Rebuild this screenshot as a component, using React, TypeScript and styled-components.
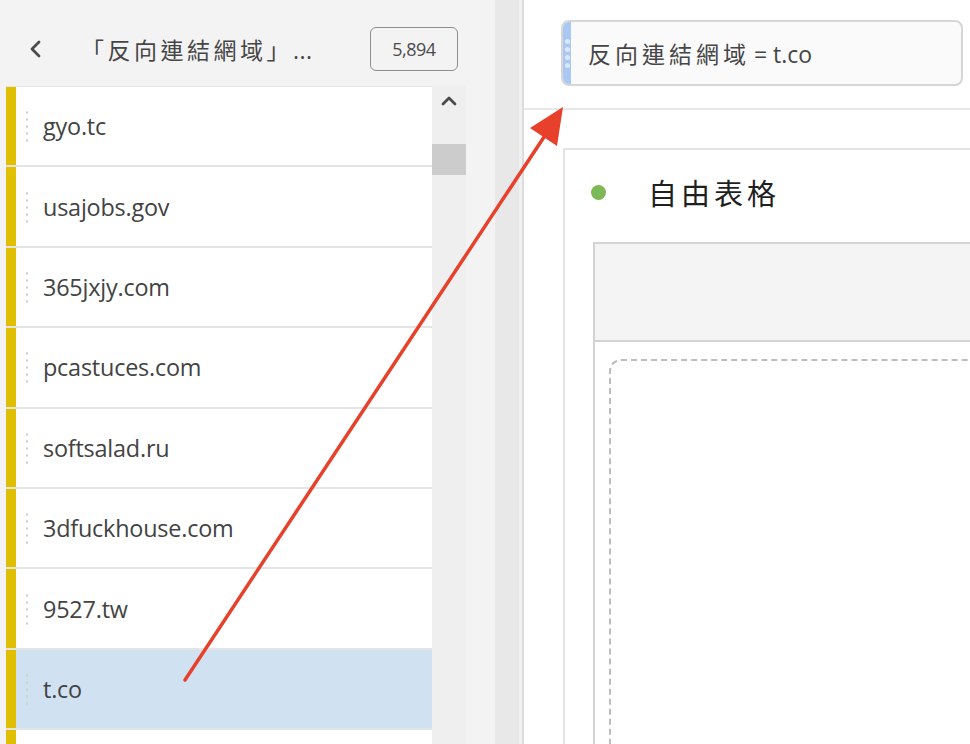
import React from "react";
import styled, { createGlobalStyle } from "styled-components";

const Global = createGlobalStyle`
  html, body { margin: 0; padding: 0; overflow: hidden; }
  body { font-family: "Open Sans", "Noto Sans CJK TC", sans-serif; }
  * { box-sizing: border-box; }
`;

const LATIN = `"Open Sans", "Noto Sans CJK TC", sans-serif`;
const CJK = `"Open Sans", "Noto Sans CJK TC", sans-serif`;

const Page = styled.div`
  position: relative;
  width: 970px;
  height: 744px;
  display: flex;
  overflow: hidden;
  background: #fff;
`;

const LeftPanel = styled.div`
  width: 495px;
  flex: none;
  background: #f3f3f3;
  display: flex;
  flex-direction: column;
  padding-left: 6px;
  padding-right: 29px;
`;

const Header = styled.div`
  height: 86px;
  display: flex;
  align-items: center;
  padding-top: 11px;
  padding-right: 8px;
`;

const BackBtn = styled.div`
  width: 40px;
  display: flex;
  align-items: center;
  padding-left: 22px;
  color: #4b4b4b;
`;

const HeaderTitle = styled.div`
  flex: 1;
  padding-left: 35px;
  font-family: ${CJK};
  font-size: 23px;
  letter-spacing: 3.5px;
  color: #464646;
  white-space: nowrap;
`;

const Ellipsis = styled.span`
  letter-spacing: 0.5px;
`;

const CountBadge = styled.div`
  width: 88px;
  height: 44px;
  border: 1.5px solid #8e8e8e;
  border-radius: 6px;
  display: flex;
  align-items: center;
  justify-content: center;
  font-family: ${LATIN};
  font-size: 18px;
  color: #4b4b4b;
  letter-spacing: -0.5px;
`;

const ListArea = styled.div`
  flex: 1;
  display: flex;
  min-height: 0;
`;

const List = styled.div`
  width: 426px;
  display: flex;
  flex-direction: column;
  gap: 2px;
  background: #e4e4e4;
  padding-top: 1px;
  overflow: hidden;
`;

const Row = styled.div<{ $selected?: boolean }>`
  flex: none;
  height: 78.4px;
  display: flex;
  align-items: center;
  background: ${(p) => (p.$selected ? "#d0e1f2" : "#ffffff")};
  border-left: 10px solid #dfbf00;
`;

const Handle = styled.div<{ $selected?: boolean }>`
  width: 2px;
  height: 34px;
  margin-left: 10px;
  margin-right: 15px;
  background-image: radial-gradient(
    circle,
    ${(p) => (p.$selected ? "#c7d9c6" : "#cfcfcf")} 1px,
    transparent 1.3px
  );
  background-size: 2px 7px;
`;

const RowText = styled.span`
  font-family: ${LATIN};
  font-size: 23.4px;
  color: #434343;
  letter-spacing: -0.2px;
`;

const ScrollTrack = styled.div`
  width: 34px;
  background: #efefef;
  display: flex;
  flex-direction: column;
  align-items: center;
`;

const ScrollUp = styled.div`
  height: 30px;
  display: flex;
  align-items: center;
  justify-content: center;
  color: #4a4a4a;
`;

const ScrollThumb = styled.div`
  width: 100%;
  height: 31px;
  margin-top: 28px;
  background: #cccccc;
`;

const Splitter = styled.div`
  width: 29px;
  flex: none;
  background: #e8e8e8;
  border-right: 2px solid #dcdcdc;
  box-shadow: inset -3px 0 0 #f1f1f1;
`;

const RightPanel = styled.div`
  flex: 1;
  display: flex;
  flex-direction: column;
  background: #fff;
  min-width: 0;
`;

const FilterBar = styled.div`
  height: 110px;
  flex: none;
  border-bottom: 2px solid #e8e8e8;
  padding: 20px 0 0 37px;
`;

const FilterPill = styled.div`
  width: 402px;
  height: 66px;
  border: 2px solid #d6d6d6;
  border-radius: 8px;
  background: #fafafa;
  display: flex;
  align-items: center;
  overflow: hidden;
`;

const PillGrip = styled.div`
  width: 8px;
  align-self: stretch;
  background-color: #a9c8f2;
  display: flex;
  flex-direction: column;
  align-items: center;
  justify-content: center;
  gap: 3px;
`;

const GripDot = styled.span`
  width: 5px;
  height: 5px;
  border-radius: 50%;
  background: #dbe8fa;
`;

const PillText = styled.span`
  margin-left: 17px;
  font-family: ${CJK};
  font-size: 23px;
  letter-spacing: 4px;
  color: #464646;
  white-space: nowrap;
`;

const PillLatin = styled.span`
  letter-spacing: 0;
  margin-left: -2px;
`;

const Canvas = styled.div`
  flex: 1;
  padding: 38px 0 0 39px;
  min-height: 0;
`;

const Card = styled.div`
  height: 100%;
  margin-right: -20px;
  border: 2px solid #e3e3e3;
  border-right: none;
  border-bottom: none;
  display: flex;
  flex-direction: column;
  padding: 0 0 0 28px;
`;

const CardTitleRow = styled.div`
  height: 92px;
  display: flex;
  align-items: center;
  padding-bottom: 8px;
`;

const StatusDot = styled.span`
  width: 15px;
  height: 15px;
  border-radius: 50%;
  background: #7cb856;
  margin-left: -2px;
`;

const CardTitle = styled.span`
  margin-left: 42px;
  font-family: ${CJK};
  font-size: 29px;
  letter-spacing: 4px;
  color: #1f1f1f;
`;

const Table = styled.div`
  flex: 1;
  border: 2px solid #d3d3d3;
  border-right: none;
  border-bottom: none;
  display: flex;
  flex-direction: column;
`;

const TableHeader = styled.div`
  height: 98px;
  flex: none;
  background: #f4f4f4;
  border-bottom: 2px solid #d3d3d3;
`;

const TableBody = styled.div`
  flex: 1;
  padding: 17px 0 0 14px;
`;

const DropZone = styled.div`
  height: 100%;
  border: 2px dashed #bdbdbd;
  border-right: none;
  border-bottom: none;
  border-top-left-radius: 12px;
`;

const ArrowLayer = styled.svg`
  position: absolute;
  left: 0;
  top: 0;
  pointer-events: none;
`;

const domains = [
  "gyo.tc",
  "usajobs.gov",
  "365jxjy.com",
  "pcastuces.com",
  "softsalad.ru",
  "3dfuckhouse.com",
  "9527.tw",
  "t.co",
  "",
];

export default function App() {
  return (
    <>
      <Global />
      <Page>
        <LeftPanel>
          <Header>
            <BackBtn>
              <svg width="14" height="20" viewBox="0 0 14 20">
                <path d="M11 3 L4 10 L11 17" fill="none" stroke="#4b4b4b" strokeWidth="2.8" strokeLinecap="round" strokeLinejoin="round" />
              </svg>
            </BackBtn>
            <HeaderTitle>
              「反向連結網域」<Ellipsis>...</Ellipsis>
            </HeaderTitle>
            <CountBadge>5,894</CountBadge>
          </Header>
          <ListArea>
            <List>
              {domains.map((d, i) => (
                <Row key={i} $selected={d === "t.co"}>
                  <Handle $selected={d === "t.co"} />
                  <RowText>{d}</RowText>
                </Row>
              ))}
            </List>
            <ScrollTrack>
              <ScrollUp>
                <svg width="16" height="12" viewBox="0 0 16 12">
                  <path d="M2 9 L8 3 L14 9" fill="none" stroke="#4a4a4a" strokeWidth="2.8" strokeLinecap="round" strokeLinejoin="round" />
                </svg>
              </ScrollUp>
              <ScrollThumb />
            </ScrollTrack>
          </ListArea>
        </LeftPanel>
        <Splitter />
        <RightPanel>
          <FilterBar>
            <FilterPill>
              <PillGrip>
                <GripDot />
                <GripDot />
                <GripDot />
                <GripDot />
              </PillGrip>
              <PillText>
                反向連結網域<PillLatin> = t.co</PillLatin>
              </PillText>
            </FilterPill>
          </FilterBar>
          <Canvas>
            <Card>
              <CardTitleRow>
                <StatusDot />
                <CardTitle>自由表格</CardTitle>
              </CardTitleRow>
              <Table>
                <TableHeader />
                <TableBody>
                  <DropZone />
                </TableBody>
              </Table>
            </Card>
          </Canvas>
        </RightPanel>
        <ArrowLayer width="970" height="744" viewBox="0 0 970 744">
          <line x1="185" y1="680" x2="546" y2="134" stroke="#e8412b" strokeWidth="3.5" strokeLinecap="round" />
          <polygon points="563,107 530,128 557,146" fill="#e8412b" />
        </ArrowLayer>
      </Page>
    </>
  );
}
